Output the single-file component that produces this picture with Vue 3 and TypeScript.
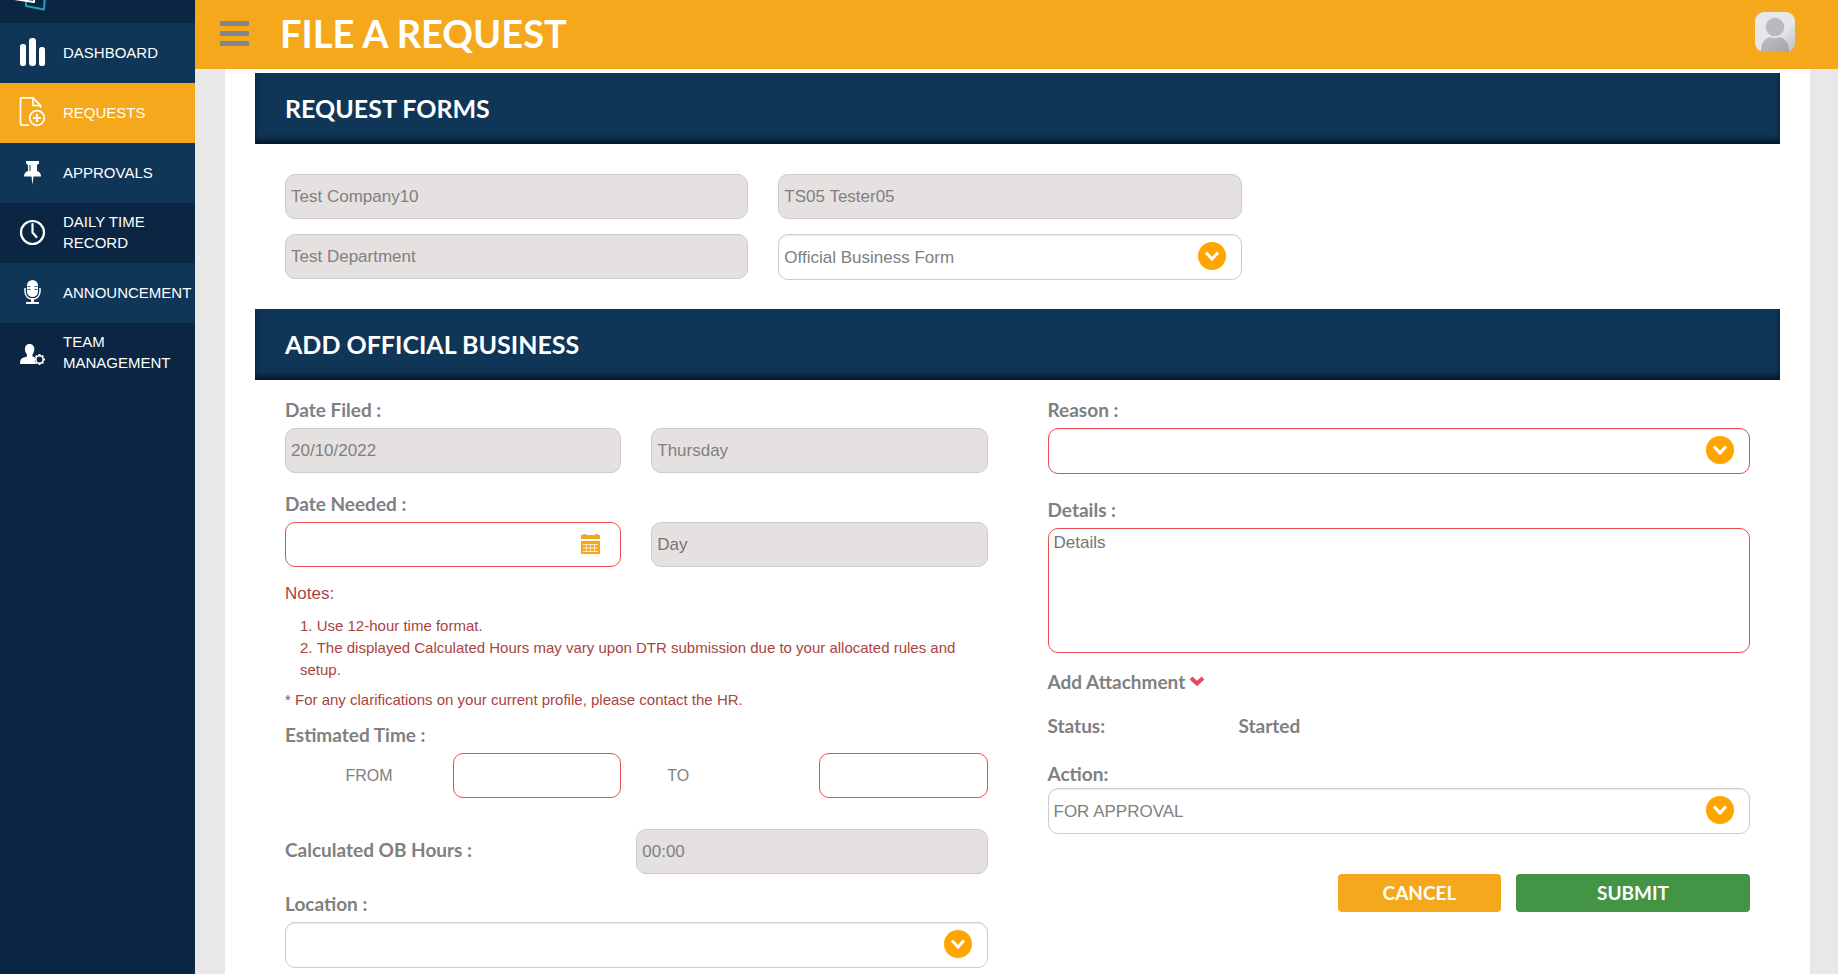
<script setup lang="ts">
import { ref } from 'vue'

interface NavItem {
  label: string
  icon: string
  tone: 'light' | 'active' | 'dark'
}

const nav: NavItem[] = [
  { label: 'DASHBOARD', icon: 'bars', tone: 'light' },
  { label: 'REQUESTS', icon: 'file', tone: 'active' },
  { label: 'APPROVALS', icon: 'pin', tone: 'light' },
  { label: 'DAILY TIME RECORD', icon: 'clock', tone: 'dark' },
  { label: 'ANNOUNCEMENT', icon: 'mic', tone: 'light' },
  { label: 'TEAM MANAGEMENT', icon: 'team', tone: 'dark' },
]

const teeth = [0, 45, 90, 135, 180, 225, 270, 315]

const formType = ref('Official Business Form')
const reason = ref('')
const location = ref('')
const action = ref('FOR APPROVAL')
const dateNeeded = ref('')
const details = ref('')
const timeFrom = ref('')
const timeTo = ref('')
</script>

<template>
  <div class="shell">
    <aside class="sidebar">
      <div class="brand">
        <svg width="50" height="24" viewBox="0 0 50 24" fill="none" aria-hidden="true">
          <path d="M26 14v5l18 3.500 1-14" stroke="#1fa3b5" stroke-width="2" stroke-linejoin="round" />
          <path d="M14 12l20 3V8" stroke="#fff" stroke-width="2" stroke-linejoin="round" />
        </svg>
      </div>
      <nav>
        <a v-for="item in nav" :key="item.label" href="#" class="nav-item" :class="item.tone">
          <svg class="nav-icon" width="28" height="30" viewBox="0 0 28 30" aria-hidden="true">
            <g v-if="item.icon === 'bars'" fill="#fff">
              <rect x="2" y="7" width="6" height="22" rx="2.5" />
              <rect x="11" y="1" width="7" height="28" rx="3" />
              <rect x="21" y="10" width="6" height="19" rx="2.5" />
            </g>
            <g v-else-if="item.icon === 'file'" fill="none" stroke="#fff" stroke-width="1.7">
              <path d="M11.500 28.200H4Q2.500 28.200 2.500 26.700V2.300Q2.500.8 4 .8h11l7.500 7.500V11" />
              <path d="M15 1v7.500h7.500" />
              <circle cx="19" cy="21" r="7.300" />
              <path d="M19 17v8M15 21h8" stroke-width="2" />
            </g>
            <g v-else-if="item.icon === 'pin'" fill="#fff">
              <path d="M8 4h13v2.500l-2 1.500v6q4 1 4 5.500h-7.500L14.500 28l-1-8.500H6q0-4.500 4-5.500V8L8 6.500z" />
              <path d="M12 8v6" stroke="#0f3557" />
            </g>
            <g v-else-if="item.icon === 'clock'" fill="none" stroke="#fff" stroke-width="2.200">
              <circle cx="14.500" cy="15.500" r="11.500" />
              <path d="M14.500 7V15.500l4 4.500" stroke-linecap="round" />
            </g>
            <g v-else-if="item.icon === 'mic'" fill="#fff">
              <rect x="9" y="3" width="11" height="17" rx="5.500" />
              <path d="M9.500 9.500h3M9.500 12.500h3M16.500 9.500h3M16.500 12.500h3" stroke="#0f3557" stroke-width=".8" />
              <path d="M7 11v4q1 7 7.500 7t7.500-7v-4" fill="none" stroke="#fff" stroke-width="1.500" />
              <path d="M13 21h3v4h5v2H8v-2h5z" />
            </g>
            <g v-else fill="#fff">
              <path d="M11.500 7c3.500 0 5 2.500 4.800 5.500-.2 2.500-1 3.800-1.800 5v2l5 1.500q-3 3-1.500 6H2q0-5 2.500-6L9 19.500v-2c-1-1.200-2-2.500-2-5C6.800 9.500 8 7 11.500 7z" />
              <circle cx="21.500" cy="22.500" r="5" fill="#0a2643" />
              <circle cx="21.500" cy="22.500" r="3.700" fill="none" stroke="#fff" stroke-width="1.500" />
              <path v-for="t in teeth" :key="t" d="M21.500 19.200v-2.200" stroke="#fff" stroke-width="2" :transform="`rotate(${t} 21.500 22.500)`" />
            </g>
          </svg>
          <span>{{ item.label }}</span>
        </a>
      </nav>
    </aside>

    <div class="page">
      <header class="topbar">
        <button type="button" class="menu" aria-label="Toggle menu"><i></i><i></i><i></i></button>
        <h1>FILE A REQUEST</h1>
        <button type="button" class="avatar" aria-label="Account">
          <svg width="40" height="40" viewBox="0 0 40 40" aria-hidden="true">
            <defs>
              <linearGradient id="tile" x1="0" y1="0" x2="1" y2="1">
                <stop offset=".6" stop-color="#e6e7e8" />
                <stop offset="1" stop-color="#bcbdc1" />
              </linearGradient>
              <linearGradient id="torso" x1="0" y1="0" x2="1" y2="1">
                <stop offset="0" stop-color="#bdbec2" />
                <stop offset="1" stop-color="#a5a6ad" />
              </linearGradient>
            </defs>
            <rect width="40" height="40" rx="9" fill="url(#tile)" />
            <path d="M6 40v-3q1-10 9-12 5 2 10 0 8 2 9 12v3z" fill="url(#torso)" />
            <circle cx="20" cy="15" r="10" fill="#e6e7e8" />
            <circle cx="20" cy="15" r="9.300" fill="#b9babe" />
          </svg>
        </button>
      </header>

      <main class="panel">
        <h2 class="bar">REQUEST FORMS</h2>
        <div class="owner">
          <input class="box" aria-label="Company" value="Test Company10" disabled />
          <input class="box" aria-label="Employee" value="TS05 Tester05" disabled />
          <input class="box owner-department" aria-label="Department" value="Test Department" disabled />
          <div class="select">
            <select v-model="formType" class="box" aria-label="Form type">
              <option>Official Business Form</option>
            </select>
            <svg class="drop" viewBox="0 0 28 28" aria-hidden="true"><circle cx="14" cy="14" r="14" fill="#ffa500" /><path d="M8 10.500l6 6.500 6-6.500" /></svg>
          </div>
        </div>

        <h2 class="bar">ADD OFFICIAL BUSINESS</h2>
        <form class="columns" @submit.prevent>
          <div class="column">
            <label class="label" for="filed">Date Filed :</label>
            <div class="pair">
              <input id="filed" class="box" value="20/10/2022" disabled />
              <input class="box" aria-label="Day filed" value="Thursday" disabled />
            </div>

            <label class="label needed" for="needed">Date Needed :</label>
            <div class="pair">
              <div class="date">
                <input id="needed" v-model="dateNeeded" class="box required" />
                <svg class="calendar" viewBox="0 0 19 20" aria-hidden="true">
                  <path d="M1 1h1V0h3v1h9V0h3v1h2v4H0V1zM0 7h19v13H0z" fill="#f5a81c" />
                  <path d="M2 10.500h15M2 14h15M2 17.500h15M5.500 10v8M9.500 10v8M13.500 10v8" stroke="#fff" stroke-width=".7" />
                </svg>
              </div>
              <input class="box" aria-label="Day needed" placeholder="Day" disabled />
            </div>

            <div class="notes">
              <p class="notes-title">Notes:</p>
              <ol>
                <li>Use 12-hour time format.</li>
                <li>The displayed Calculated Hours may vary upon DTR submission due to your allocated rules and setup.</li>
              </ol>
              <p>* For any clarifications on your current profile, please contact the HR.</p>
            </div>

            <p class="label estimated">Estimated Time :</p>
            <div class="pair">
              <div class="time">
                <label class="from" for="from">FROM</label>
                <input id="from" v-model="timeFrom" class="box required" />
              </div>
              <div class="time">
                <label class="to" for="to">TO</label>
                <input id="to" v-model="timeTo" class="box required" />
              </div>
            </div>

            <div class="hours">
              <label class="label" for="hours">Calculated OB Hours :</label>
              <input id="hours" class="box" value="00:00" disabled />
            </div>

            <label class="label place" for="location">Location :</label>
            <div class="select">
              <select id="location" v-model="location" class="box"><option value=""></option></select>
              <svg class="drop" viewBox="0 0 28 28" aria-hidden="true"><circle cx="14" cy="14" r="14" fill="#ffa500" /><path d="M8 10.500l6 6.500 6-6.500" /></svg>
            </div>
          </div>

          <div class="column">
            <label class="label" for="reason">Reason :</label>
            <div class="select">
              <select id="reason" v-model="reason" class="box required"><option value=""></option></select>
              <svg class="drop" viewBox="0 0 28 28" aria-hidden="true"><circle cx="14" cy="14" r="14" fill="#ffa500" /><path d="M8 10.500l6 6.500 6-6.500" /></svg>
            </div>

            <label class="label details" for="details">Details :</label>
            <textarea id="details" v-model="details" class="box required" placeholder="Details"></textarea>

            <button type="button" class="label attach">
              Add Attachment
              <svg width="16" height="12" viewBox="0 0 16 12" aria-hidden="true"><path d="M2 2l6 5.500L14 2" fill="none" stroke="#e84a5f" stroke-width="4" /></svg>
            </button>

            <div class="status label"><span>Status:</span><span>Started</span></div>

            <label class="label action" for="action">Action:</label>
            <div class="select">
              <select id="action" v-model="action" class="box"><option>FOR APPROVAL</option></select>
              <svg class="drop" viewBox="0 0 28 28" aria-hidden="true"><circle cx="14" cy="14" r="14" fill="#ffa500" /><path d="M8 10.500l6 6.500 6-6.500" /></svg>
            </div>

            <div class="buttons">
              <button type="button" class="cancel">CANCEL</button>
              <button type="submit" class="submit">SUBMIT</button>
            </div>
          </div>
        </form>
      </main>
    </div>
  </div>
</template>

<style>
body {
  margin: 0;
  background: #e8e8e8;
}
</style>

<style scoped>
* {
  box-sizing: border-box;
}

.shell {
  display: grid;
  grid-template-columns: 195px minmax(0, 1fr);
  min-height: 100vh;
  font-family: "Liberation Sans", Arial, sans-serif;
  font-size: 17px;
  color: #808080;
}

.sidebar {
  background: #0a2643;
}

.brand {
  height: 23px;
  overflow: hidden;
  display: flex;
  align-items: flex-start;
}

.brand svg {
  margin-top: -13px;
}

.nav-item {
  display: flex;
  align-items: center;
  gap: 17px;
  height: 60px;
  padding: 0 0 2px 18px;
  color: #fff;
  font-size: 15px;
  line-height: 21px;
  text-decoration: none;
}

.nav-icon {
  flex: none;
}

.light {
  background: #0f3557;
}

.active {
  background: #f5a81c;
}

.page {
  display: flex;
  flex-direction: column;
}

.topbar {
  display: flex;
  align-items: center;
  height: 69px;
  padding: 0 43px 3px 25px;
  background: #f5a81c;
}

.menu {
  display: grid;
  gap: 5px;
  width: 29px;
  padding: 0;
  border: 0;
  background: none;
}

.menu i {
  height: 5px;
  border-radius: 1px;
  background: #80868c;
}

h1 {
  margin: 0 auto 0 31px;
  font: 700 38px/44px Lato, sans-serif;
  color: #fff;
}

.avatar {
  height: 40px;
  margin-bottom: 2px;
  padding: 0;
  border: 0;
  background: none;
}

.panel {
  flex: 1;
  margin: 0 28px 0 30px;
  padding: 4px 30px 6px;
  background: #fff;
}

.bar {
  margin: 0;
  padding: 0 30px;
  font: 700 25px/71px Lato, sans-serif;
  color: #fff;
  background: #0f3557;
  box-shadow: inset 0 -5px 6px -1px rgba(0, 0, 0, 0.6);
}

.owner {
  display: grid;
  grid-template-columns: repeat(3, minmax(0, 1fr));
  gap: 15px 30px;
  padding: 30px 45px 29px 30px;
}

.owner-department {
  grid-column: 1;
}

.box {
  display: block;
  width: 100%;
  height: 45px;
  margin: 0;
  padding: 0 5px;
  border: 1px solid #ccc;
  border-radius: 10px;
  background: #fff;
  font: inherit;
  color: #808080;
}

.box:disabled {
  background: #e5e1e0;
  opacity: 1;
}

.box::placeholder {
  color: #757575;
}

.select,
.date {
  position: relative;
}

.select .box {
  height: 46px;
  appearance: none;
  box-shadow: inset 0 1px 1px rgba(0, 0, 0, 0.08);
}

.box.required {
  border-color: #e84c4c;
}

.drop {
  position: absolute;
  top: 8px;
  right: 16px;
  width: 28px;
  height: 28px;
  pointer-events: none;
}

.drop path {
  fill: none;
  stroke: #fff;
  stroke-width: 3;
}

.calendar {
  position: absolute;
  top: 12px;
  right: 21px;
  width: 19px;
  height: 20px;
}

.columns {
  display: grid;
  grid-template-columns: repeat(2, minmax(0, 1fr));
  gap: 60px;
  padding: 18px 30px 0;
}

.label {
  display: block;
  margin: 0 0 6px;
  font: 700 19px/24px Lato, sans-serif;
  color: #808080;
}

.pair {
  display: grid;
  grid-template-columns: repeat(2, minmax(0, 1fr));
  gap: 30px;
}

.needed {
  margin-top: 19px;
}

.notes {
  margin-top: 16px;
  font-size: 15px;
  line-height: 22px;
  color: #a94442;
}

.notes p {
  margin: 0;
}

.notes .notes-title {
  font-size: 17px;
}

.notes ol {
  margin: 10px 0 8px;
  padding-left: 15px;
  list-style-position: inside;
}

.estimated {
  margin-top: 12px;
}

.time {
  display: grid;
  grid-template-columns: repeat(2, minmax(0, 1fr));
  align-items: center;
  font-size: 16px;
}

.from {
  text-align: center;
}

.to {
  padding-left: 16px;
}

.hours {
  display: grid;
  grid-template-columns: repeat(2, minmax(0, 1fr));
  align-items: center;
  margin-top: 31px;
}

.hours .label {
  margin: 0 0 4px;
}

.place {
  margin-top: 18px;
}

.details {
  margin-top: 24px;
}

textarea.box {
  height: 125px;
  padding: 4px 5px;
  resize: none;
}

.attach {
  display: flex;
  align-items: center;
  gap: 4px;
  margin: 17px 0 20px;
  padding: 0;
  border: 0;
  background: none;
}

.status {
  display: grid;
  grid-template-columns: 191px 1fr;
}

.action {
  margin: 24px 0 2px;
}

.buttons {
  display: flex;
  justify-content: flex-end;
  gap: 15px;
  margin-top: 40px;
}

.buttons button {
  height: 38px;
  border: 0;
  border-radius: 4px;
  font: 700 19px/24px Lato, sans-serif;
  color: #fff;
}

.buttons .cancel {
  width: 163px;
  background: #f5a81c;
}

.buttons .submit {
  width: 234px;
  background: #439445;
}
</style>
